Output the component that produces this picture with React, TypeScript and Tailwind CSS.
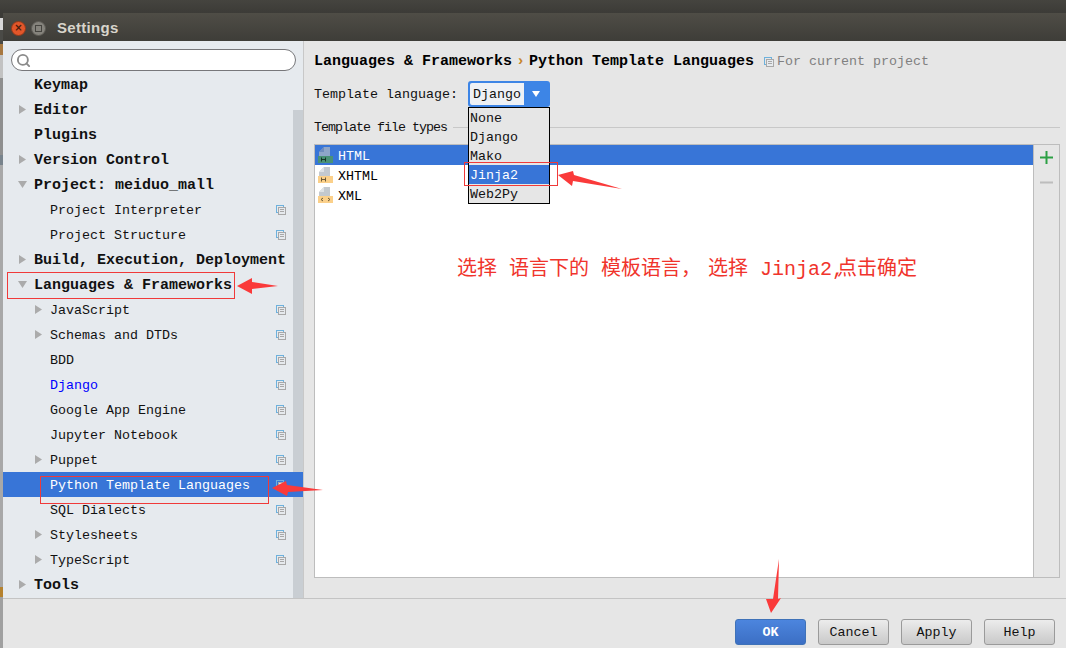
import React from 'react'
import { Search } from 'lucide-react'

const mono = "font-['Liberation_Mono','Noto_Sans_CJK_SC',monospace]"

interface TreeItem {
    label: string,
    level: 0 | 1,
    arrow?: 'right' | 'down',
    shared?: boolean,
    selected?: boolean,
    blue?: boolean
}

const tree: TreeItem[] = [
    { label: 'Keymap', level: 0 },
    { label: 'Editor', level: 0, arrow: 'right' },
    { label: 'Plugins', level: 0 },
    { label: 'Version Control', level: 0, arrow: 'right' },
    { label: 'Project: meiduo_mall', level: 0, arrow: 'down' },
    { label: 'Project Interpreter', level: 1, shared: true },
    { label: 'Project Structure', level: 1, shared: true },
    { label: 'Build, Execution, Deployment', level: 0, arrow: 'right' },
    { label: 'Languages & Frameworks', level: 0, arrow: 'down' },
    { label: 'JavaScript', level: 1, arrow: 'right', shared: true },
    { label: 'Schemas and DTDs', level: 1, arrow: 'right', shared: true },
    { label: 'BDD', level: 1, shared: true },
    { label: 'Django', level: 1, shared: true, blue: true },
    { label: 'Google App Engine', level: 1, shared: true },
    { label: 'Jupyter Notebook', level: 1, shared: true },
    { label: 'Puppet', level: 1, arrow: 'right', shared: true },
    { label: 'Python Template Languages', level: 1, shared: true, selected: true },
    { label: 'SQL Dialects', level: 1, shared: true },
    { label: 'Stylesheets', level: 1, arrow: 'right', shared: true },
    { label: 'TypeScript', level: 1, arrow: 'right', shared: true },
    { label: 'Tools', level: 0, arrow: 'right' },
]

function Arrow({ dir }: { dir: 'right' | 'down' }) {
    return (
        <svg width="9" height="9" viewBox="0 0 9 9" className="shrink-0">
            {dir === 'right'
                ? <path d="M1 0 L8 4.5 L1 9 Z" fill="#ababab" />
                : <path d="M0 1 L9 1 L4.5 8 Z" fill="#ababab" />}
        </svg>
    )
}

function SharedIcon() {
    return (
        <svg width="10" height="10" viewBox="0 0 10 10" className="shrink-0">
            <rect x="0.5" y="0.5" width="7" height="7" fill="none" stroke="#6eb1dc" />
            <rect x="2.5" y="2.5" width="7" height="7" fill="#e6eaee" stroke="#a8a8a8" />
            <path d="M4 4.5 H8 M4 6.5 H8" stroke="#a8a8a8" />
        </svg>
    )
}

function FileIcon({ tag, selected }: { tag: string, selected?: boolean }) {
    const page = selected ? '#8fa6c9' : '#c3c9cf'
    const fold = selected ? '#6f8cbd' : '#dfe3e6'
    return (
        <svg width="15" height="18" viewBox="0 0 15 18" className="shrink-0">
            <path d="M6 1 H12 V10 H1 V6 Z" fill={page} />
            <path d="M6 1 V6 H1 Z" fill={fold} />
            <rect x="0" y="10" width="15" height="7" fill={selected ? '#4a9276' : '#fbd08a'} />
            {tag === 'H'
                ? <path d="M3.5 11.5 V15.5 M7.5 11.5 V15.5 M3.5 13.5 H7.5" stroke={selected ? '#17352a' : '#6b5a3a'} strokeWidth="1" fill="none" />
                : <path d="M5 12 L3 13.5 L5 15 M10 12 L12 13.5 L10 15" stroke="#6b5a3a" strokeWidth="1" fill="none" />}
        </svg>
    )
}

function TreeRow({ item }: { item: TreeItem }) {
    const arrowLeft = item.level === 0 ? 'pl-[15px]' : 'pl-[31px]'
    const textColor = item.selected ? 'text-white' : item.blue ? 'text-[#0000ff]' : 'text-[#111]'
    const font = item.level === 0 ? 'text-[15px] font-bold pt-[4px]' : 'text-[13.33px] pt-[2px]'
    return (
        <div className={`h-[25px] flex items-center shrink-0 ${arrowLeft} ${item.selected ? 'bg-[#3875d7]' : ''}`}>
            <span className="w-[16px] shrink-0 flex items-center">
                {item.arrow && <Arrow dir={item.arrow} />}
            </span>
            <span className={`${font} ${textColor} whitespace-pre flex-1`}>{item.label}</span>
            {item.shared && <span className="mr-[17px]"><SharedIcon /></span>}
        </div>
    )
}

function DialogButton({ label, primary }: { label: string, primary?: boolean }) {
    return (
        <button
            type="button"
            className={`w-[71px] h-[26px] pt-[2px] rounded-[3px] border text-[13.33px] flex items-center justify-center ${primary
                ? 'border-[#3f72b8] bg-gradient-to-b from-[#4c85de] to-[#3c6fc4] text-white font-bold'
                : 'border-[#9a9a9a] bg-gradient-to-b from-[#ececec] to-[#c9c9c9] text-[#111]'}`}
        >
            {label}
        </button>
    )
}

function RedArrow({ className, points, w, h }: { className: string, points: string, w: number, h: number }) {
    return (
        <svg width={w} height={h} viewBox={`0 0 ${w} ${h}`} className={`absolute ${className}`}>
            <polygon points={points} fill="#fa3a3a" />
        </svg>
    )
}

export default function App() {
    return (
        <div className={`relative w-[1066px] h-[648px] overflow-hidden flex flex-col bg-[#3c3b37] ${mono}`}>
            <div className="h-[13px] shrink-0 bg-gradient-to-b from-[#45443f] to-[#3c3b37]" />
            <div className="flex-1 flex min-h-0">
                <div className="w-[3px] shrink-0 flex flex-col bg-[#8f8f8f]">
                    <div className="h-[5px] bg-[#3c3b37]" />
                    <div className="h-[12px] bg-[#d8d8d8]" />
                    <div className="h-[14px] bg-[#4a4a46]" />
                    <div className="h-[11px] bg-[#a87840]" />
                    <div className="h-[23px] bg-[#c2c2c2]" />
                    <div className="h-[77px] bg-[#8f8f8f]" />
                    <div className="h-[10px] bg-[#78838c]" />
                    <div className="flex-1 bg-[#a8a8a8]" />
                    <div className="h-[10px] bg-[#b5822f]" />
                    <div className="h-[51px] bg-[#a0a0a0]" />
                </div>
                <div className="flex-1 flex flex-col min-w-0 bg-[#e6e6e6]">
                    <div className="h-[28px] shrink-0 flex items-center pt-[2px] bg-gradient-to-b from-[#4f4d46] to-[#3e3d38]">
                        <span className="ml-[8px] w-[15px] h-[15px] rounded-full bg-[#e2562a] border border-[#8f3a1c] flex items-center justify-center text-[10px] leading-none text-[#4a1c0c] font-bold font-['DejaVu_Sans',sans-serif]">×</span>
                        <span className="ml-[5px] w-[15px] h-[15px] rounded-full bg-[#85837c] border border-[#5c5a54] flex items-center justify-center">
                            <span className="w-[7px] h-[7px] border border-[#45443f]" />
                        </span>
                        <span className="ml-[11px] text-[15px] tracking-[0.3px] font-bold text-[#d8d4cb] font-['Liberation_Sans',sans-serif]">Settings</span>
                    </div>
                    <div className="flex-1 flex min-h-0">
                        <div className="w-[300px] shrink-0 flex flex-col bg-[#e6eaee] relative overflow-hidden">
                            <div className="absolute right-0 top-[69px] bottom-0 w-[10px] bg-[#c9ced3]" />
                            <div className="h-[31px] shrink-0 px-[8px] pt-[8px] pr-[7px]">
                                <div className="h-[22px] rounded-[11px] border border-[#77777a] bg-white flex items-center pl-[4px]">
                                    <Search size={15} strokeWidth={3} className="text-[#8a8a8a]" />
                                </div>
                            </div>
                            <div className="relative flex flex-col">
                                {tree.map(item => <TreeRow key={item.label} item={item} />)}
                            </div>
                        </div>
                        <div className="w-px shrink-0 bg-[#c8c8c8]" />
                        <div className="flex-1 flex flex-col min-w-0 pl-[10px] pr-[6px] pt-[11px] pb-[20px]">
                            <div className="h-[18px] pt-[2px] flex items-center whitespace-pre text-[15px] font-bold text-black">
                                <span>Languages & Frameworks</span>
                                <span className="w-[17px] text-center text-[#c8872a]">›</span>
                                <span>Python Template Languages</span>
                                <span className="ml-[10px] mr-[3px]"><SharedIcon /></span>
                                <span className="text-[13.33px] font-normal text-[#808080]">For current project</span>
                            </div>
                            <div className="mt-[11px] h-[26px] flex items-center text-[13.33px] text-[#111]">
                                <span className="w-[154px] pt-[2px] whitespace-pre">Template language:</span>
                                <div className="w-[82px] h-[26px] rounded-[3px] bg-[#3d85e6] p-[2px] flex items-stretch">
                                    <span className="flex-1 bg-[#eef1f5] rounded-l-[2px] flex items-center pl-[3px] pt-[2px]">Django</span>
                                    <span className="w-[24px] flex items-center justify-center">
                                        <svg width="8" height="6" viewBox="0 0 8 6"><path d="M0 0 H8 L4 6 Z" fill="#fff" /></svg>
                                    </span>
                                </div>
                            </div>
                            <div className="mt-[11px] h-[18px] flex items-center text-[13.33px] tracking-[-1px] text-[#111]">
                                <span className="whitespace-pre pt-[2px]">Template file types</span>
                                <span className="ml-[6px] flex-1 h-px bg-[#c8c8c8]" />
                            </div>
                            <div className="mt-[8px] flex-1 flex border border-[#bdbdbd] min-h-0">
                                <div className="flex-1 flex flex-col bg-white text-[13.33px] text-black">
                                    <div className="h-[20px] flex items-center bg-[#3875d7] text-white pl-[3px] gap-[5px]">
                                        <FileIcon tag="H" selected /><span className="pt-[3px]">HTML</span>
                                    </div>
                                    <div className="h-[20px] flex items-center pl-[3px] gap-[5px]">
                                        <FileIcon tag="H" /><span className="pt-[3px]">XHTML</span>
                                    </div>
                                    <div className="h-[20px] flex items-center pl-[3px] gap-[5px]">
                                        <FileIcon tag="X" /><span className="pt-[3px]">XML</span>
                                    </div>
                                </div>
                                <div className="w-[26px] shrink-0 border-l border-[#bdbdbd] flex flex-col items-center pt-[6px] gap-[12px]">
                                    <svg width="13" height="13" viewBox="0 0 13 13"><path d="M0 6.5 H13 M6.5 0 V13" stroke="#2ca044" strokeWidth="2" /></svg>
                                    <svg width="13" height="13" viewBox="0 0 13 13"><path d="M0 6.5 H13" stroke="#bdbdbd" strokeWidth="2" /></svg>
                                </div>
                            </div>
                        </div>
                    </div>
                    <div className="h-[50px] shrink-0 border-t border-[#c4c4c4] flex items-start justify-end gap-[12px] pt-[20px] pr-[11px]">
                        <DialogButton label="OK" primary />
                        <DialogButton label="Cancel" />
                        <DialogButton label="Apply" />
                        <DialogButton label="Help" />
                    </div>
                </div>
            </div>

            {/* combo popup */}
            <div className="absolute left-[468px] top-[107px] w-[82px] h-[97px] border border-black bg-[#e6e6e6] text-[13.33px] text-[#111] flex flex-col">
                <div className="h-[19px] flex items-center pl-px pt-[2px]">None</div>
                <div className="h-[19px] flex items-center pl-px pt-[2px]">Django</div>
                <div className="h-[19px] flex items-center pl-px pt-[2px]">Mako</div>
                <div className="h-[19px] flex items-center pl-px pt-[2px] bg-[#3875d7] text-white">Jinja2</div>
                <div className="h-[19px] flex items-center pl-px pt-[2px]">Web2Py</div>
            </div>

            {/* annotations */}
            <div className="absolute left-[7px] top-[272px] w-[228px] h-[27px] border border-[#f03a3a]" />
            <div className="absolute left-[40px] top-[476px] w-[229px] h-[28px] border border-[#f03a3a]" />
            <div className="absolute left-[464px] top-[162px] w-[94px] h-[24px] border border-[#f03a3a]" />
            <RedArrow className="left-[236px] top-[277px]" w={43} h={18} points="1,9 16,1 16,5 42,9 16,12 16,17" />
            <RedArrow className="left-[272px] top-[479px]" w={52} h={18} points="0,9 14,2 15,6 51,11 16,13 15,17" />
            <RedArrow className="left-[557px] top-[168px]" w={66} h={24} points="1,7 16,3 17,7 65,21 16,13 15,18" />
            <RedArrow className="left-[765px] top-[559px]" w={17} h={55} points="14,0 13,40 16,39 6,54 1,40 8,40" />
            <div className="absolute left-[457px] top-[258px] text-[20px] leading-[24px] text-[#f0342c] whitespace-pre">选择 语言下的 模板语言，<span className="ml-[7px]">选择</span> Jinja2<span className="tracking-[-7px]">,</span>点击确定</div>
        </div>
    )
}
